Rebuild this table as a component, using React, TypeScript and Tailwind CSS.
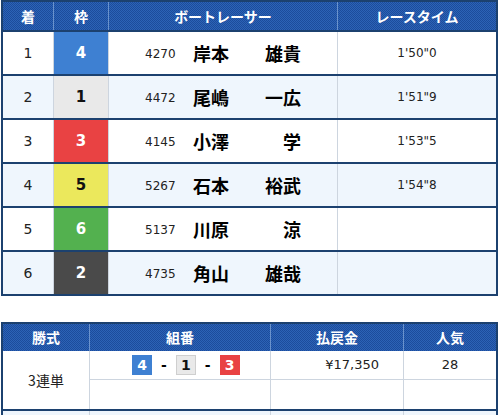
import React from 'react';

type Racer = {
  rank: number;
  frame: number;
  regNo: string;
  sei: string;
  mei: string;
  time: string;
};

const racers: Racer[] = [
  { rank: 1, frame: 4, regNo: '4270', sei: '岸本', mei: '雄貴', time: `1'50"0` },
  { rank: 2, frame: 1, regNo: '4472', sei: '尾嶋', mei: '一広', time: `1'51"9` },
  { rank: 3, frame: 3, regNo: '4145', sei: '小澤', mei: '学', time: `1'53"5` },
  { rank: 4, frame: 5, regNo: '5267', sei: '石本', mei: '裕武', time: `1'54"8` },
  { rank: 5, frame: 6, regNo: '5137', sei: '川原', mei: '涼', time: '' },
  { rank: 6, frame: 2, regNo: '4735', sei: '角山', mei: '雄哉', time: '' },
];

// waku colours
const frameClass: Record<number, string> = {
  1: 'bg-[#e9e9e9] text-[#111]',
  2: 'bg-[#4a4a4a] text-white',
  3: 'bg-[#e94243] text-white',
  4: 'bg-[#3e80d2] text-white',
  5: 'bg-[#ebe85c] text-[#111]',
  6: 'bg-[#53b14f] text-white',
};

const headBg =
  'bg-[repeating-conic-gradient(#1c4c9c_0_25%,#2c63b6_0_50%)] bg-[length:2px_2px]';

const font = "font-['DejaVu_Sans','Noto_Sans_CJK_JP',sans-serif]";
const jp = "font-['Noto_Sans_CJK_JP',sans-serif]";

const HeadCell: React.FC<{ w: string; last?: boolean; children: React.ReactNode }> = ({ w, last, children }) => (
  <div
    className={`${w} h-full flex items-center justify-center text-white text-[14px] font-bold ${jp} ${
      last ? '' : 'border-r border-[#6a92cc]'
    }`}
  >
    {children}
  </div>
);

const Badge: React.FC<{ n: number }> = ({ n }) => (
  <span
    className={`w-5 h-5 flex items-center justify-center text-[14px] font-bold ${font} ${frameClass[n]} ${
      n === 1 ? 'border border-[#cfcfcf]' : ''
    }`}
  >
    {n}
  </span>
);

export default function App() {
  return (
    <div className={`w-[501px] h-[415px] bg-white overflow-hidden ${font}`}>
      {/* result table */}
      <div className="ml-px w-[497px] border-2 border-[#1c416f]">
        <div className={`flex h-[28px] ${headBg}`}>
          <HeadCell w="w-[51px]">着</HeadCell>
          <HeadCell w="w-[55px]">枠</HeadCell>
          <HeadCell w="w-[229px]">ボートレーサー</HeadCell>
          <HeadCell w="w-[158px]" last>
            レースタイム
          </HeadCell>
        </div>
        {racers.map((r, i) => (
          <div
            key={r.rank}
            className={`flex h-[44px] border-t-2 border-[#1c416f] ${i % 2 ? 'bg-[#eff6fd]' : 'bg-white'}`}
          >
            <div className="w-[51px] flex items-center justify-center text-[14px] text-[#222] border-r border-[#cdd5df]">
              {r.rank}
            </div>
            <div
              className={`w-[55px] flex items-center justify-center text-[15px] font-bold border-r border-[#cdd5df] ${frameClass[r.frame]}`}
            >
              {r.frame}
            </div>
            <div className="w-[229px] flex items-center pl-[36px] border-r border-[#cdd5df]">
              <span className="text-[12px] text-[#222] w-[48px] pt-[2px]">{r.regNo}</span>
              <span className={`w-[108px] flex justify-between text-[18px] leading-none font-bold text-black ${jp}`}>
                <span>{r.sei}</span>
                <span>{r.mei}</span>
              </span>
            </div>
            <div className="w-[158px] flex items-center justify-center text-[12px] text-[#222]">{r.time}</div>
          </div>
        ))}
      </div>

      {/* payout table */}
      <div className="ml-px mt-[26px] w-[497px] border-2 border-b-0 border-[#1c416f]">
        <div className={`flex h-[27px] ${headBg}`}>
          <HeadCell w="w-[87px]">勝式</HeadCell>
          <HeadCell w="w-[181px]">組番</HeadCell>
          <HeadCell w="w-[133px]">払戻金</HeadCell>
          <HeadCell w="w-[92px]" last>
            人気
          </HeadCell>
        </div>
        <div className="flex">
          <div className={`w-[87px] h-[58px] flex items-center justify-center text-[14px] text-[#222] border-r border-[#cdd5df] ${jp}`}>
            3連単
          </div>
          <div className="flex flex-col">
            <div className="flex h-[29px] border-b border-[#cdd5df]">
              <div className="w-[181px] flex items-center pl-[42px] gap-[9px] border-r border-[#cdd5df]">
                <Badge n={4} />
                <span className="text-[14px] font-bold text-black">-</span>
                <Badge n={1} />
                <span className="text-[14px] font-bold text-black">-</span>
                <Badge n={3} />
              </div>
              <div className="w-[133px] flex items-center justify-end pr-[24px] text-[13px] text-[#222] border-r border-[#cdd5df]">
                ¥17,350
              </div>
              <div className="w-[92px] flex items-center justify-center text-[13px] text-[#222]">28</div>
            </div>
            <div className="flex h-[29px]">
              <div className="w-[181px] border-r border-[#cdd5df]" />
              <div className="w-[133px] border-r border-[#cdd5df]" />
              <div className="w-[92px]" />
            </div>
          </div>
        </div>
        <div className="flex h-[20px] border-t-2 border-[#1c416f] bg-[#eff6fd]">
          <div className="w-[87px] border-r border-[#cdd5df]" />
          <div className="w-[181px] border-r border-[#cdd5df]" />
          <div className="w-[133px] border-r border-[#cdd5df]" />
          <div className="w-[92px]" />
        </div>
      </div>
    </div>
  );
}
